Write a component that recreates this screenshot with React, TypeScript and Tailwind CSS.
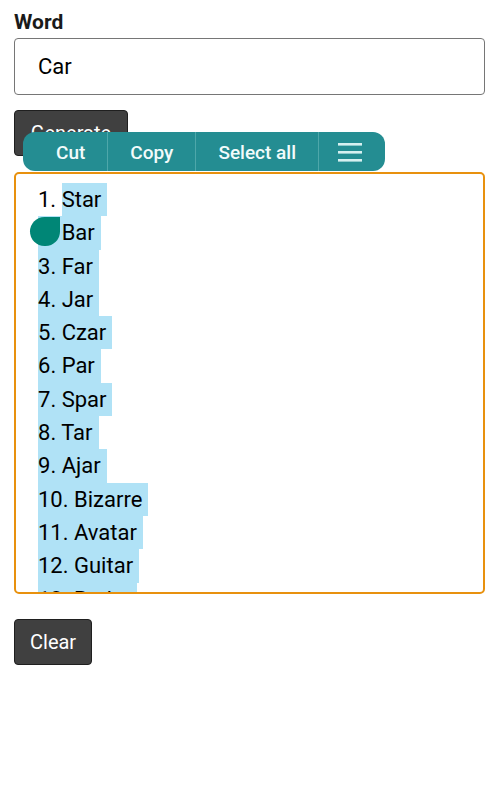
import React from "react";

const words = [
  "Star",
  "Bar",
  "Far",
  "Jar",
  "Czar",
  "Par",
  "Spar",
  "Tar",
  "Ajar",
  "Bizarre",
  "Avatar",
  "Guitar",
  "Radar",
  "Cigar",
  "Sonar",
];

const App: React.FC = () => {
  return (
    <div
      className="relative min-h-screen bg-white px-[14px] pt-[8px] text-black"
      style={{ fontFamily: "Roboto, 'Noto Sans', sans-serif" }}
    >
      <label className="block text-[21px] font-bold leading-[28px] text-[#1a1a1a]">
        Word
      </label>
      <div className="mt-[2px] flex h-[57px] items-center rounded-[4px] border border-[#767676] pl-[23px] text-[22px]">
        Car
      </div>

      <button className="mt-[15px] block h-[46px] w-[114px] rounded-[4px] border border-[#1f1f1f] bg-[#404040] text-[20px] text-white">
        Generate
      </button>

      <div className="relative mt-[16px] h-[422px] overflow-hidden rounded-[5px] border-2 border-[#e8910e] pl-[22px] pt-[9px]">
        {words.map((w, i) => (
          <div key={w} className="h-[33.3px] text-[22px] leading-[33.3px]">
            {i === 0 ? (
              <>
                <span className="inline-block">1.&nbsp;</span>
                <span className="inline-block bg-[#b0e2f6] pr-[6px]">{w}</span>
              </>
            ) : (
              <span className="inline-block bg-[#b0e2f6] pr-[6px]">
                {i + 1}. {w}
              </span>
            )}
          </div>
        ))}
        {/* selection handle */}
        <div className="absolute left-[14px] top-[43px] h-[29px] w-[30px] rounded-full rounded-tr-none bg-[#008676]" />
      </div>

      <button className="mt-[25px] block h-[46px] rounded-[4px] border border-[#1f1f1f] bg-[#404040] px-[15px] text-[20px] text-white">
        Clear
      </button>

      {/* text selection toolbar */}
      <div className="absolute left-[23px] top-[132px] flex h-[39px] items-stretch rounded-[12px] bg-[#248d92] text-[19px] font-medium text-[#f2fbfb]">
        <div className="flex items-center border-r border-[#4ea7aa] pl-[33px] pr-[22px] pt-[3px]">Cut</div>
        <div className="flex items-center border-r border-[#4ea7aa] px-[22px] pt-[3px]">Copy</div>
        <div className="flex items-center border-r border-[#4ea7aa] px-[22px] pt-[3px]">Select all</div>
        <div className="flex items-center pl-[19px] pr-[23px]">
          <svg width="24" height="20" viewBox="0 0 24 20">
            <rect x="0" y="1" width="24" height="2.6" fill="#d6f0f0" />
            <rect x="0" y="9" width="24" height="2.6" fill="#d6f0f0" />
            <rect x="0" y="17" width="24" height="2.6" fill="#d6f0f0" />
          </svg>
        </div>
      </div>
    </div>
  );
};

export default App;
